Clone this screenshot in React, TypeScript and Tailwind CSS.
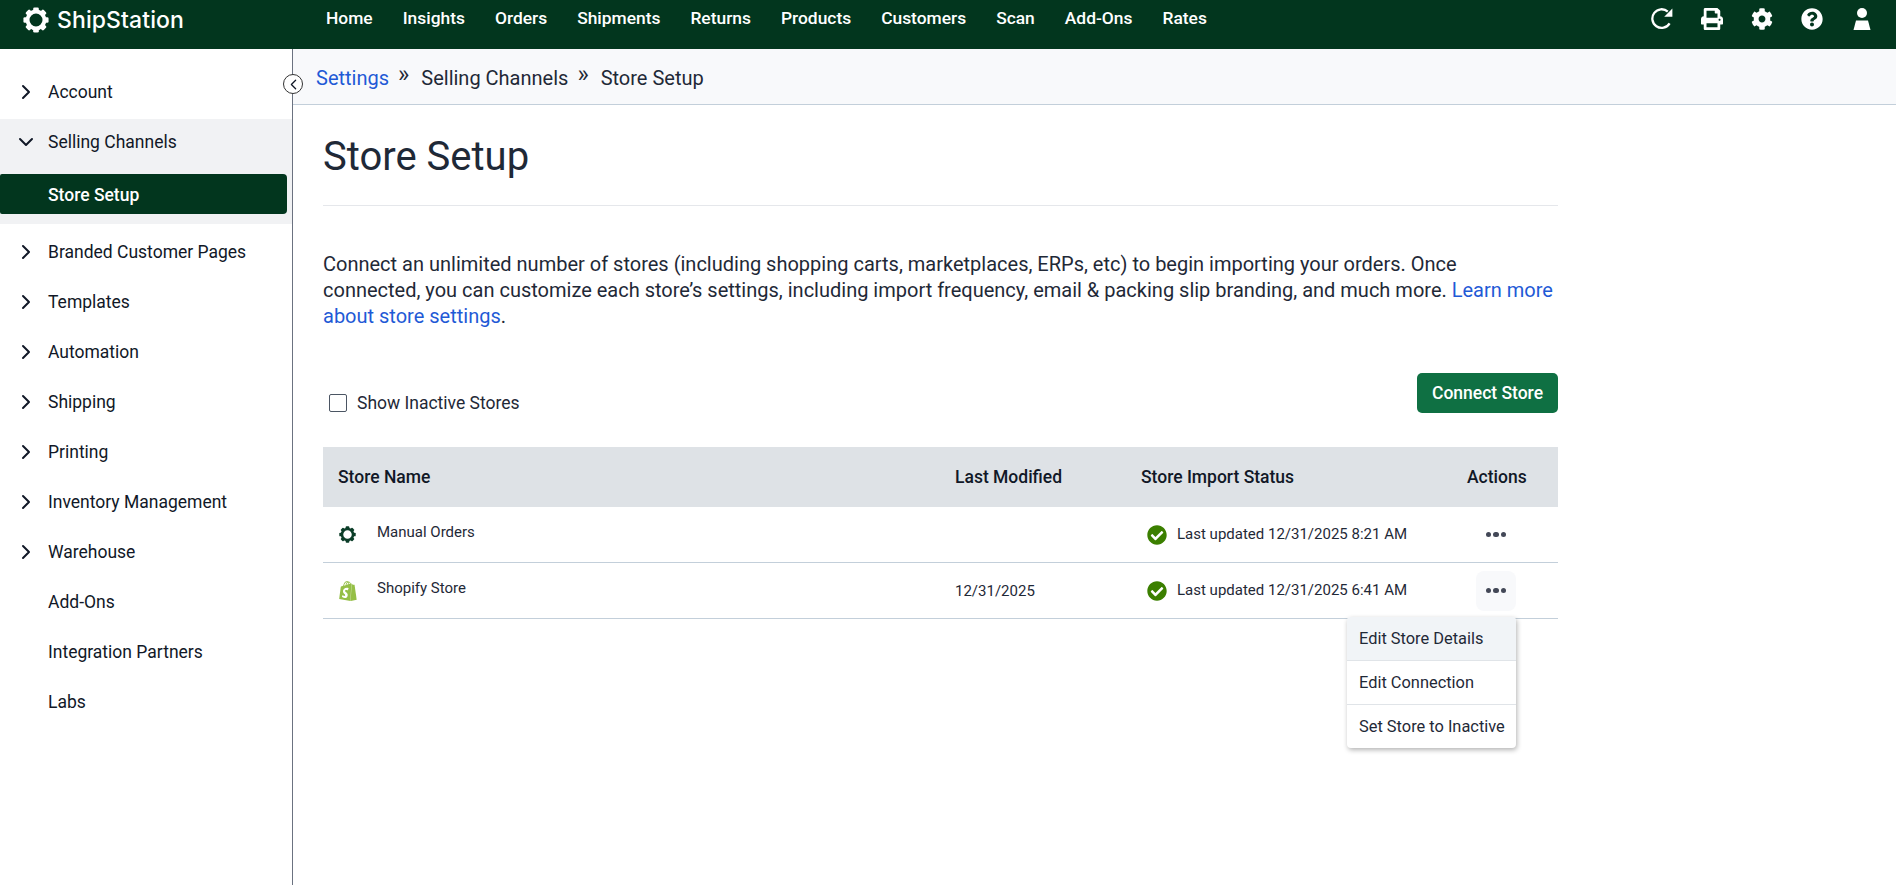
import { FaPrint, FaCog, FaQuestionCircle, FaCheckCircle } from "react-icons/fa";
import { SiShopify } from "react-icons/si";
import { ChevronRight, ChevronDown, ChevronLeft } from "lucide-react";

const nav = ["Home", "Insights", "Orders", "Shipments", "Returns", "Products", "Customers", "Scan", "Add-Ons", "Rates"];

function Gear({ size, color }: { size: number; color: string }) {
  const teeth = [0, 45, 90, 135, 180, 225, 270, 315];
  return (
    <svg width={size} height={size} viewBox="0 0 24 24">
      {teeth.map((a) => (
        <rect key={a} x="9.4" y="0.4" width="5.2" height="5" rx="1.2" fill={color} transform={`rotate(${a} 12 12)`} />
      ))}
      <circle cx="12" cy="12" r="7.8" fill="none" stroke={color} strokeWidth="3.6" />
    </svg>
  );
}

function SideItem({ label, chevron = true }: { label: string; chevron?: boolean }) {
  return (
    <div className="flex items-center h-[50px] pl-[14px]">
      <span className="w-[34px] flex items-center">
        {chevron && <ChevronRight size={24} strokeWidth={2} className="text-[#111827]" />}
      </span>
      <span className="text-[17.5px] text-[#111827]">{label}</span>
    </div>
  );
}

function Dots() {
  return (
    <span className="flex gap-[2px]">
      <span className="w-[5.5px] h-[5.5px] rounded-full bg-[#434857]" />
      <span className="w-[5.5px] h-[5.5px] rounded-full bg-[#434857]" />
      <span className="w-[5.5px] h-[5.5px] rounded-full bg-[#434857]" />
    </span>
  );
}

function Row({ icon, name, date, updated, active }: { icon: React.ReactNode; name: string; date: string; updated: string; active?: boolean }) {
  return (
    <div className="flex items-center h-[56px] border-b border-[#c3cfda] text-[15px] text-[#1f2937]">
      <div className="w-[632px] flex items-center pl-[15px]">
        <span className="w-[39px] flex items-center">{icon}</span>
        <span className="-mt-[5px]">{name}</span>
      </div>
      <div className="w-[186px] pt-[1px]">{date}</div>
      <div className="w-[335px] flex items-center pl-[6px]">
        <FaCheckCircle size={20} className="text-[#3b7f00] mr-[10px]" />
        <span>{updated}</span>
      </div>
      <div className={`w-[40px] h-[40px] rounded-lg flex items-center justify-center ${active ? "bg-[#f8f9fb]" : ""}`}>
        <Dots />
      </div>
    </div>
  );
}

export default function App() {
  return (
    <div className="h-screen flex flex-col bg-white overflow-hidden font-['Roboto',sans-serif]">
      <header className="h-[49px] shrink-0 bg-[#02361e] flex items-start text-white">
        <div className="w-[326px] flex items-center h-[40px] pl-[23px] gap-[8px]">
          <Gear size={26} color="#ffffff" />
          <span className="text-[23px] font-medium font-['Inter',sans-serif] tracking-[0.1px]">ShipStation</span>
        </div>
        <nav className="flex gap-[30px] h-[37px] items-center text-[17.4px] font-medium">
          {nav.map((n) => (
            <span key={n}>{n}</span>
          ))}
        </nav>
        <div className="ml-auto flex items-center gap-[28px] h-[38px] pr-[23px]">
          <svg width="22" height="22" viewBox="0 0 22 22" fill="none">
            <path d="M18.6 15.4A9.3 9.3 0 1 1 16.8 3.6" stroke="#fff" strokeWidth="2.3" />
            <path d="M21.4 0.6v8.2h-8.2z" fill="#fff" />
          </svg>
          <FaPrint size={22} />
          <FaCog size={22} />
          <FaQuestionCircle size={22} />
          <svg width="22" height="22" viewBox="0 0 22 22" fill="#fff">
            <circle cx="11" cy="5" r="5" />
            <path d="M5 12.5h12l2.5 9.5H2.5z" />
          </svg>
        </div>
      </header>
      <div className="flex flex-1 min-h-0">
        <aside className="w-[293px] shrink-0 border-r border-[#6b7280] relative pt-[18px]">
          <button className="absolute right-[-11px] top-[25px] w-[20px] h-[20px] rounded-full border border-[#333333] bg-white flex items-center justify-center z-10">
            <ChevronLeft size={17} strokeWidth={1.8} className="text-[#111827]" />
          </button>
          <SideItem label="Account" />
          <div className="bg-[#f1f2f4] h-[105px] mt-[2px]">
            <div className="flex items-center h-[46px] pl-[14px]">
              <span className="w-[34px] flex items-center">
                <ChevronDown size={24} strokeWidth={2} className="text-[#111827]" />
              </span>
              <span className="text-[17.5px] text-[#111827]">Selling Channels</span>
            </div>
            <div className="mt-[9px] w-[287px] h-[40px] bg-[#02361e] rounded-r-[4px] flex items-center pl-[48px] pt-[2px] text-[17.5px] font-medium text-white rounded-l-[2px]">
              Store Setup
            </div>
          </div>
          <div className="pt-[3px]">
            <SideItem label="Branded Customer Pages" />
            <SideItem label="Templates" />
            <SideItem label="Automation" />
            <SideItem label="Shipping" />
            <SideItem label="Printing" />
            <SideItem label="Inventory Management" />
            <SideItem label="Warehouse" />
            <SideItem label="Add-Ons" chevron={false} />
            <SideItem label="Integration Partners" chevron={false} />
            <SideItem label="Labs" chevron={false} />
          </div>
        </aside>
        <main className="flex-1 min-w-0">
          <div className="h-[56px] bg-[#f8f9fb] border-b border-[#c3cfda] flex items-center pl-[23px] pt-[2px] text-[20px] text-[#1f2937]">
            <span className="text-[#1f5ad6]">Settings</span>
            <span className="ml-[9px] mr-[12px] -mt-[8px] text-[24px] leading-none">»</span>
            <span>Selling Channels</span>
            <span className="ml-[9px] mr-[12px] -mt-[8px] text-[24px] leading-none">»</span>
            <span>Store Setup</span>
          </div>
          <div className="w-[1235px] ml-[30px]">
            <h1 className="text-[40px] leading-[48px] text-[#1f2937] pt-[28px] pb-[24px] border-b border-[#e5e7eb] h-[101px]">Store Setup</h1>
            <p className="mt-[45px] pr-[2px] text-[20px] leading-[26px] text-[#1f2937]">
              Connect an unlimited number of stores (including shopping carts, marketplaces, ERPs, etc) to begin importing your orders. Once connected, you can customize each store’s settings, including import frequency, email &amp; packing slip branding, and much more. <span className="text-[#1f5ad6]">Learn more about store settings</span>.
            </p>
            <div className="flex items-start justify-between mt-[44px] h-[74px]">
              <label className="flex items-center mt-[17px] pl-[6px] text-[17.5px] text-[#1f2937]">
                <span className="w-[18px] h-[18px] border border-[#4b5563] rounded-[2px] mr-[10px] bg-white" />
                Show Inactive Stores
              </label>
              <button className="w-[141px] h-[40px] rounded-[5px] bg-[#0f7043] text-white text-[17.5px] font-medium">Connect Store</button>
            </div>
            <div className="flex items-center h-[60px] bg-[#dee2e6] text-[17.5px] font-medium text-[#111827]">
              <div className="w-[632px] pl-[15px]">Store Name</div>
              <div className="w-[186px]">Last Modified</div>
              <div className="w-[326px]">Store Import Status</div>
              <div>Actions</div>
            </div>
            <Row icon={<span className="ml-[1px] flex"><Gear size={17} color="#0b3d28" /></span>} name="Manual Orders" date="" updated="Last updated 12/31/2025 8:21 AM" />
            <Row icon={<SiShopify size={20} className="text-[#95bf47]" />} name="Shopify Store" date="12/31/2025" updated="Last updated 12/31/2025 6:41 AM" active />
            <div className="relative">
              <div className="absolute left-[1024px] -top-[2px] w-[169px] bg-white rounded-[4px] shadow-[1px_2px_5px_rgba(0,0,0,0.3)] text-[16.4px] text-[#1f2937] z-20">
                <div className="h-[44px] flex items-center pl-[12px] pt-[2px] bg-[#f1f4f7] border-b border-[#e0e4e8] rounded-t-[4px]">Edit Store Details</div>
                <div className="h-[44px] flex items-center pl-[12px] pt-[2px] border-b border-[#e0e4e8]">Edit Connection</div>
                <div className="h-[43px] flex items-center pl-[12px] pt-[2px]">Set Store to Inactive</div>
              </div>
            </div>
          </div>
        </main>
      </div>
    </div>
  );
}
